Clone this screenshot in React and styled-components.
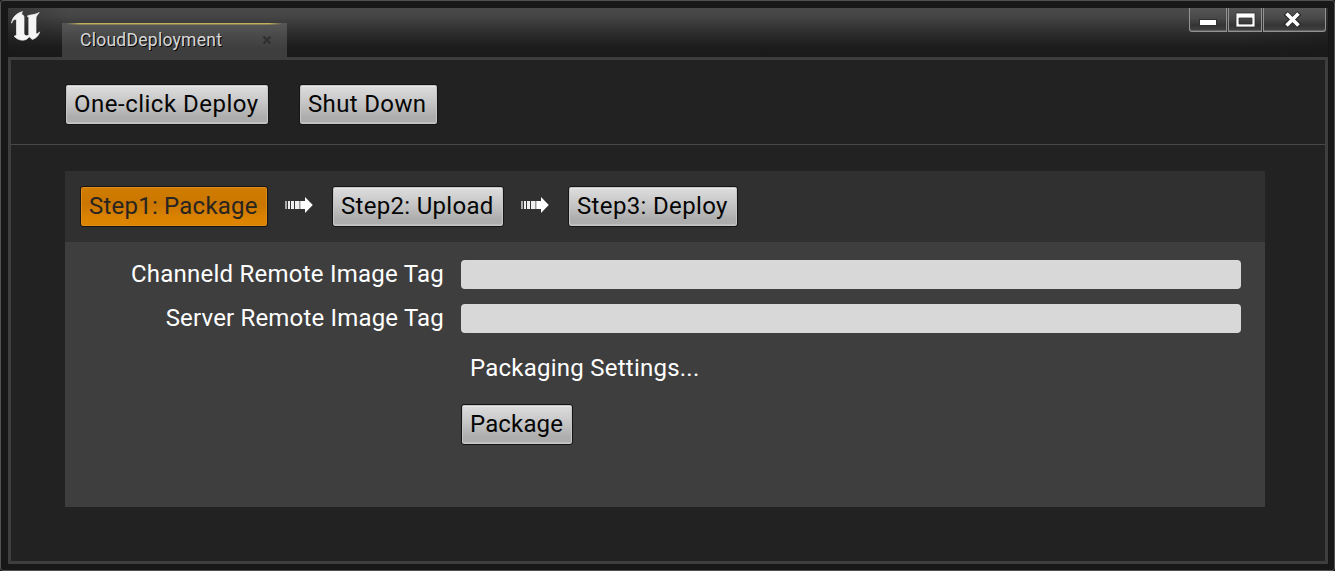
import React from "react";
import styled, { createGlobalStyle, css } from "styled-components";

const GlobalStyle = createGlobalStyle`
  * { box-sizing: border-box; }
  html, body { margin: 0; background: #161616; overflow: hidden; }
  button, input { font: inherit; }
`;

const Window = styled.div`
  width: 1335px;
  height: 571px;
  padding: 7px 6px 6px 7px;
  border: 1px solid #505252;
  border-radius: 3px;
  background: #181818;
  font-family: Roboto, "Noto Sans", sans-serif;
  color: #fff;
`;

const TitleBar = styled.header`
  display: flex;
  align-items: flex-start;
  height: 49px;
  background:
    linear-gradient(90deg, rgba(24, 24, 24, 0.35), transparent 60px, transparent calc(100% - 90px), rgba(24, 24, 24, 0.5)),
    linear-gradient(#4a4a4a 0, #454545 8px, #2e2e2e 24px, #1c1c1c 39px, #1a1a1a 100%);
`;

const Logo = styled.svg`
  display: block;
  flex: none;
  width: 54px;
  height: 49px;
`;

const Tab = styled.div`
  display: flex;
  align-items: center;
  justify-content: space-between;
  width: 225px;
  height: 34px;
  margin-top: 15px;
  padding: 0 15px 0 18px;
  background:
    linear-gradient(90deg, transparent 2%, #bfb05c 8%, #bfb05c 92%, transparent 98%) top / 100% 1px no-repeat,
    linear-gradient(90deg, transparent 2%, #8b7d55 8%, #8b7d55 92%, transparent 98%) 0 1px / 100% 1px no-repeat,
    linear-gradient(#575757 0, #4a4a4a 12px, #3e3e3e 26px);
`;

const TabLabel = styled.span`
  font-size: 17.5px;
  line-height: 20px;
  letter-spacing: ${({ $spacing }) => $spacing}px;
  color: #d7d7d7;
  text-shadow: 1px 1px 0 #050505;
`;

const TabClose = styled.svg`
  width: 10px;
  height: 10px;
`;

const WindowControls = styled.div`
  display: flex;
  gap: 1px;
  margin: 0 2px 0 auto;
`;

const ControlButton = styled.button`
  display: flex;
  justify-content: center;
  width: ${({ $width }) => $width}px;
  height: 24px;
  padding: 0;
  border: 1px solid #929292;
  border-top: 0;
  border-radius: ${({ $corner }) => ($corner === "left" ? "0 0 0 3px" : $corner === "right" ? "0 0 3px 0" : "0")};
  background: linear-gradient(#565656, #484848 45%, #343434 75%, #434343);
  box-shadow: inset 0 -1px 0 #626262;
`;

const Content = styled.main`
  height: 507px;
  border: 3px solid #3e3e3e;
  background: #222;
`;

const Toolbar = styled.div`
  display: flex;
  gap: 30px;
  height: 85px;
  padding: 24px 0 0 54px;
  border-bottom: 1px solid #484848;
`;

const Button = styled.button`
  display: flex;
  flex: none;
  justify-content: flex-start;
  width: ${({ $width }) => $width}px;
  height: 41px;
  padding: 0 0 0 8px;
  border: 1px solid #151515;
  border-radius: 3px;
  font-size: 24px;
  line-height: 38px;
  letter-spacing: ${({ $spacing }) => $spacing}px;
  white-space: nowrap;
  color: #050505;
  background: linear-gradient(#dedede, #cbcbcb 36%, #b9b9b9 65%, #adadad 82%, #adadad);
  box-shadow: inset 0 0 0 1px #c5c5c5, inset 0 2px 0 #e8e8e8, inset 0 -2px 0 #bdbdbd;
  ${({ $active }) => $active && css`
    color: #282420;
    border-color: #1a1510;
    background: linear-gradient(#d17d00, #ca7600 45%, #dc8300 80%, #de8500);
    box-shadow: inset 0 0 0 1px #de8d1c;
  `}
`;

const Panel = styled.section`
  width: 1200px;
  height: 336px;
  margin: 26px 0 0 54px;
  background: #3e3e3e;
`;

const Steps = styled.nav`
  display: flex;
  height: 71px;
  padding: 15px 0 0 15px;
  background: #303030;
`;

const StepArrow = styled.svg`
  flex: none;
  width: 28px;
  height: 18px;
  margin: 10px 19px 0 17px;
`;

const Form = styled.form`
  display: grid;
  grid-template-columns: 379px 780px;
  grid-template-rows: 29px 29px;
  column-gap: 17px;
  row-gap: 15px;
  padding-top: 18px;
`;

const Label = styled.label`
  font-size: 24px;
  line-height: 28px;
  letter-spacing: ${({ $spacing }) => $spacing}px;
  text-align: right;
  white-space: nowrap;
`;

const Input = styled.input`
  width: 780px;
  height: 29px;
  padding: 0 8px;
  border: 0;
  border-radius: 4px;
  background: #d8d8d8;
`;

const Actions = styled.div`
  display: flex;
  flex-direction: column;
  align-items: flex-start;
  gap: 22px;
  padding: 21px 0 0 396px;
`;

const SettingsLink = styled.span`
  padding-left: 9px;
  font-size: 24px;
  line-height: 28px;
  letter-spacing: ${({ $spacing }) => $spacing}px;
`;

function EngineLogo() {
  return (
    <Logo viewBox="8 8 54 49" aria-label="Unreal Engine">
      <path
        fill="#f4f4f4"
        stroke="#f4f4f4"
        strokeWidth=".7"
        strokeLinejoin="round"
        d="M11.6 23.2C12.3 17.4 16.2 13.4 22.6 11.6C21.9 12.3 21.4 13.4 22 14.7C23.2 15.1 24 15.7 24 17V33.3C24.2 34.8 25.3 35.7 26.7 35.7C28 35.7 28.8 34.9 28.8 34.2V18.5C28.8 17 28 16.3 27.2 16.2C29 14.6 35 15.2 39.2 12.5C38.2 14.1 36 15.7 36 18.3V32.5C36 34.4 38 34.1 39.6 31.8C39 35.3 36.3 38.1 32.4 39.5L29.2 36.8C27.4 39.3 25.2 40.2 22.2 40.2C18.5 40 15.4 38 14.1 36C15.5 36.5 16.5 35.3 16.5 33.7V21.1C16.5 19.5 15.5 18.9 14 19.7C12.8 20.3 12.1 21.4 11.6 23.2Z"
      />
    </Logo>
  );
}

function Arrow() {
  return (
    <StepArrow viewBox="0 0 28 18" aria-hidden="true">
      <path fill="#aaa" d="M0 5h2v8H0z" />
      <path fill="#eee" d="M3 5h2v8H3zM6 5h3v8H6zM10 5h4v8h-4z" />
      <path fill="#999" d="M14 5h2v8h-2z" />
      <path fill="#fff" d="M15.5 5H20V1l7.8 8L20 17v-4h-4.5z" />
    </StepArrow>
  );
}

export default function App() {
  return (
    <>
      <GlobalStyle />
      <Window>
        <TitleBar>
          <EngineLogo />
          <Tab>
            <TabLabel $spacing={0.27}>CloudDeployment</TabLabel>
            <TabClose viewBox="0 0 10 10">
              <path d="M1.5 1.5 8.5 8.5M8.5 1.5 1.5 8.5" stroke="#303030" strokeWidth="2.3" />
            </TabClose>
          </Tab>
          <WindowControls>
            <ControlButton $width={38} $corner="left" aria-label="Minimize">
              <svg width="36" height="23"><rect x="9.5" y="11.5" width="17" height="6" fill="#fff" stroke="#303030" /></svg>
            </ControlButton>
            <ControlButton $width={34} aria-label="Maximize">
              <svg width="32" height="23"><path fill="#fff" stroke="#303030" strokeWidth=".8" fillRule="evenodd" d="M7 5h19v14H7zM10 10v6h13v-6z" /></svg>
            </ControlButton>
            <ControlButton $width={63} $corner="right" aria-label="Close">
              <svg width="61" height="23">
                <path d="M21.5 5 35.5 18M35.5 5 21.5 18" stroke="#292929" strokeWidth="5.5" />
                <path d="M22.5 5.5 34.5 17.5M34.5 5.5 22.5 17.5" stroke="#fff" strokeWidth="3.6" />
              </svg>
            </ControlButton>
          </WindowControls>
        </TitleBar>
        <Content>
          <Toolbar>
            <Button $width={204} $spacing={0.5}>One-click Deploy</Button>
            <Button $width={139} $spacing={0.35}>Shut Down</Button>
          </Toolbar>
          <Panel>
            <Steps>
              <Button $width={188} $spacing={0.22} $active>Step1: Package</Button>
              <Arrow />
              <Button $width={172} $spacing={0.3}>Step2: Upload</Button>
              <Arrow />
              <Button $width={170} $spacing={0.35}>Step3: Deploy</Button>
            </Steps>
            <Form>
              <Label htmlFor="channeld-tag" $spacing={0.24}>Channeld Remote Image Tag</Label>
              <Input id="channeld-tag" />
              <Label htmlFor="server-tag" $spacing={0.18}>Server Remote Image Tag</Label>
              <Input id="server-tag" />
            </Form>
            <Actions>
              <SettingsLink $spacing={0.24}>Packaging Settings...</SettingsLink>
              <Button type="button" $width={112} $spacing={0.15}>Package</Button>
            </Actions>
          </Panel>
        </Content>
      </Window>
    </>
  );
}
